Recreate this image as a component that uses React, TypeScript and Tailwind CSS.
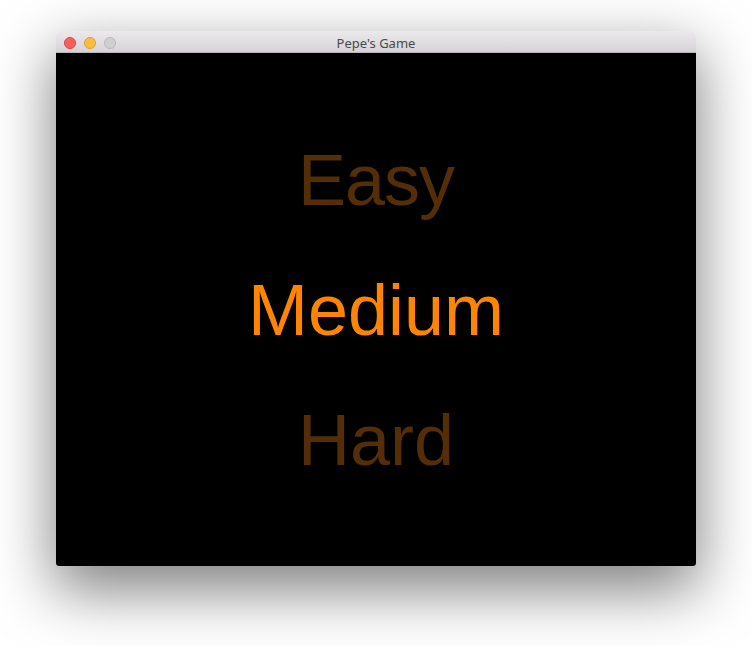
export default function App() {
  return (
    <div className="w-[752px] h-[646px] bg-white pt-[31px] pl-[56px]" style={{ fontFamily: '"Liberation Sans", Arial, sans-serif' }}>
      {/* Ventana */}
      <div className="w-[640px] h-[535px] flex flex-col rounded-t-[5px] rounded-b-[3px] shadow-[0_22px_60px_2px_rgba(0,0,0,0.5)] overflow-hidden">
        <div className="relative h-[22px] flex items-center justify-center bg-gradient-to-b from-[#ebe9eb] to-[#d5d3d5] border-b border-[#b8b6b8] shrink-0">
          <div className="absolute left-[8px] top-[6px] flex gap-[8px]">
            <span className="w-[12px] h-[12px] rounded-full bg-[#fc605c] border border-[#e0443e]" />
            <span className="w-[12px] h-[12px] rounded-full bg-[#fdbc40] border border-[#de9f34]" />
            <span className="w-[12px] h-[12px] rounded-full bg-[#d0ced0] border border-[#bab8ba]" />
          </div>
          <span className="mt-[3px] text-[13px] text-[#4a4a4a] leading-none" style={{ fontFamily: '"Noto Sans", "Liberation Sans", sans-serif' }}>Pepe's Game</span>
        </div>
        <div className="flex-1 bg-black flex flex-col items-center justify-center gap-[58px]">
          <div className="text-[72px] leading-[72px] tracking-[-1px] text-[#532e06]">Easy</div>
          <div className="text-[72px] leading-[72px] text-[#ff8400]">Medium</div>
          <div className="text-[72px] leading-[72px] text-[#532e06]">Hard</div>
        </div>
      </div>
    </div>
  );
}
